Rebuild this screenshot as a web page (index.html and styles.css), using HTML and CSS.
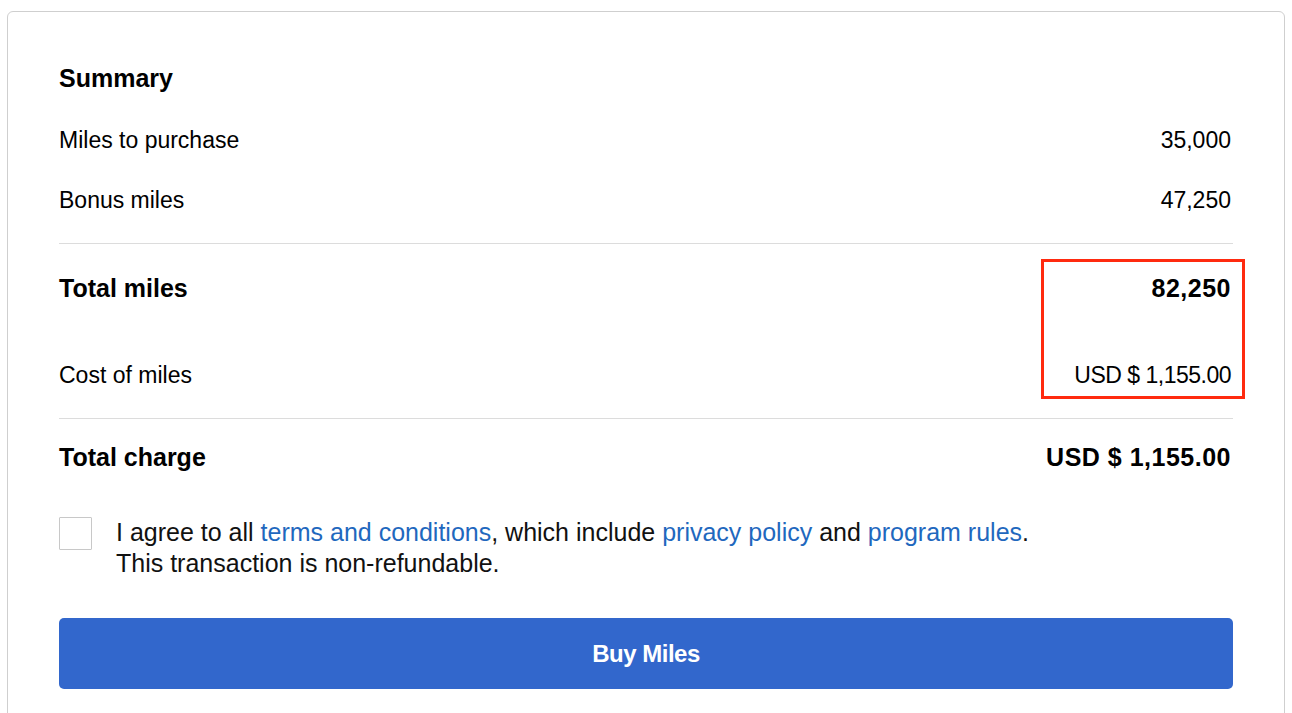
FILE: index.html
```html
<!DOCTYPE html>
<html lang="en">
<head>
    <meta charset="UTF-8">
    <meta name="viewport" content="width=device-width, initial-scale=1.0">
    <title>Buy Miles - Summary</title>
    <link rel="stylesheet" href="styles.css">
</head>
<body>
    <div class="card">
        <h2 class="summaryTitle">Summary</h2>

        <div class="row">
            <span>Miles to purchase</span>
            <span class="value">35,000</span>
        </div>
        <div class="row">
            <span>Bonus miles</span>
            <span class="value">47,250</span>
        </div>

        <div class="totals">
            <div class="row rowTotal">
                <span>Total miles</span>
                <span class="value">82,250</span>
            </div>
            <div class="row rowCost">
                <span>Cost of miles</span>
                <span class="value">USD $ 1,155.00</span>
            </div>
            <!-- highlight round the totals -->
            <div class="highlight"></div>
        </div>

        <div class="row rowCharge">
            <span>Total charge</span>
            <span class="value">USD $ 1,155.00</span>
        </div>

        <label class="agree">
            <input type="checkbox" class="agreeBox">
            <span class="agreeText">I agree to all <a href="#">terms and conditions</a>, which include <a href="#">privacy policy</a> and <a href="#">program rules</a>.<br>This transaction is non-refundable.</span>
        </label>

        <button class="buyBtn" type="button">Buy Miles</button>
    </div>
</body>
</html>
```

FILE: styles.css
```css
html {
    font-family: "Liberation Sans", Arial, sans-serif;
    color: #000;
}

body {
    margin: 0;
    background: #fff;
}

.card {
    margin: 11px 7px 0 7px;
    padding: 0 51px 60px 51px;
    border: 1px solid #cfcfcf;
    border-radius: 6px;
}

.summaryTitle {
    margin: 50px 0 16px 0;
    font-size: 25px;
    line-height: 32px;
    font-weight: 700;
}

.row {
    display: flex;
    justify-content: space-between;
    align-items: center;
    height: 60px;
    font-size: 23px;
}

.value {
    padding-right: 2px;
}

.totals {
    position: relative;
    margin-top: 13px;
    border-top: 1px solid #dcdcdc;
    border-bottom: 1px solid #dcdcdc;
}

.rowTotal {
    height: 30px;
    padding: 29px 0 0 0;
    font-size: 25px;
    font-weight: 700;
}

.rowCost {
    height: 30px;
    padding: 57px 0 28px 0;
}

.rowCost .value {
    letter-spacing: -0.5px;
}

.highlight {
    position: absolute;
    top: 15px;
    right: -12px;
    width: 198px;
    height: 134px;
    border: 3px solid #ff2a0f;
}

.rowCharge {
    height: 30px;
    padding: 23px 0 0 0;
    font-size: 25px;
    font-weight: 700;
}

.rowTotal .value,
.rowCharge .value {
    letter-spacing: 0.5px;
}

.agree {
    display: flex;
    align-items: flex-start;
    margin-top: 45px;
}

.agreeBox {
    appearance: none;
    -webkit-appearance: none;
    flex: none;
    width: 33px;
    height: 33px;
    margin: 0 24px 0 0;
    border: 1px solid #c8c8c8;
    border-radius: 1px;
    background: #fff;
}

.agreeText {
    font-size: 25px;
    line-height: 31px;
    color: #111;
}

.agreeText a {
    color: #1f68be;
    text-decoration: none;
}

.buyBtn {
    display: block;
    width: 100%;
    height: 71px;
    margin-top: 39px;
    border: none;
    border-radius: 5px;
    background-color: #3267cc;
    color: #fff;
    font-family: "Liberation Sans", Arial, sans-serif;
    font-size: 24px;
    font-weight: 700;
    letter-spacing: -0.5px;
}
```
